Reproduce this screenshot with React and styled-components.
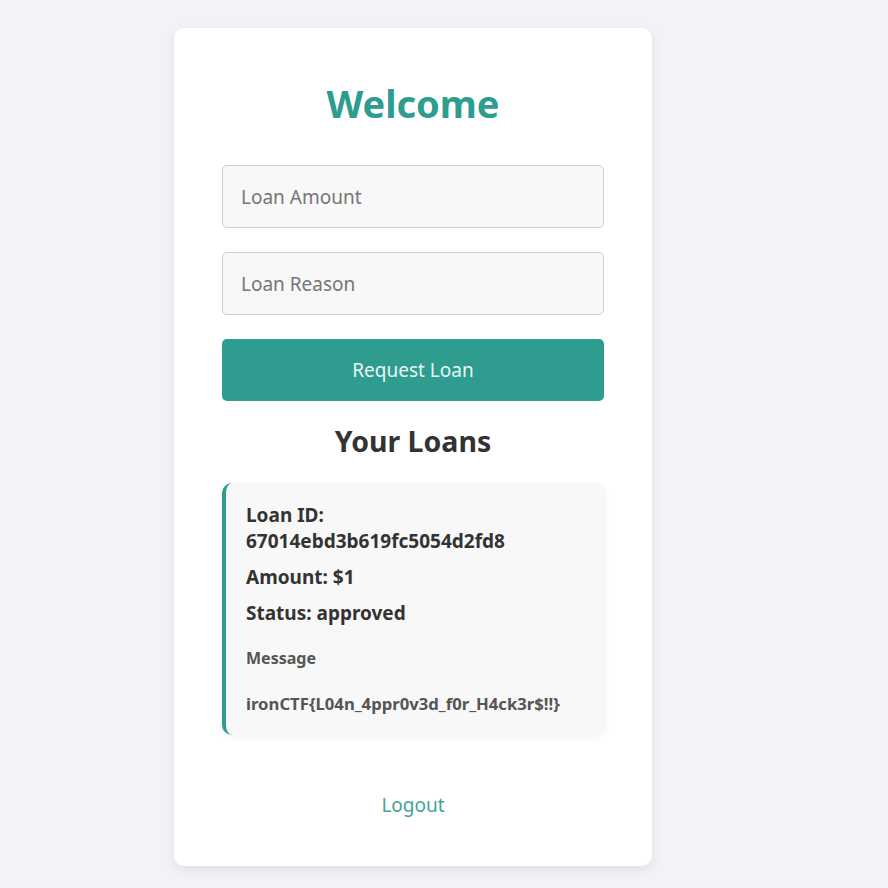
import React from 'react'
import styled, { createGlobalStyle } from 'styled-components'

const GlobalStyle = createGlobalStyle`
  html, body {
    margin: 0;
    padding: 0;
    background: #f3f2f8;
    font-family: 'Noto Sans', 'Open Sans', sans-serif;
  }
`

const Page = styled.div`
  min-height: 888px;
  padding: 28px 0 0 174px;
  box-sizing: border-box;
`

const Card = styled.div`
  width: 478px;
  box-sizing: border-box;
  background: #fff;
  border-radius: 10px;
  box-shadow: 0 4px 12px rgba(0, 0, 0, 0.08);
  padding: 50px 48px 48px;
  display: flex;
  flex-direction: column;
  align-items: stretch;
`

const Title = styled.h1`
  margin: 0 0 37px;
  text-align: center;
  color: #2e9c8f;
  font-size: 38px;
  line-height: 50px;
  font-weight: 700;
`

const Input = styled.input`
  height: 63px;
  box-sizing: border-box;
  margin-bottom: 24px;
  padding: 0 18px;
  border: 1px solid #cfcfcf;
  border-radius: 5px;
  background: #f8f8f8;
  font-family: inherit;
  font-size: 19px;
  color: #333;

  &::placeholder {
    color: #757575;
  }
`

const Button = styled.button`
  height: 62px;
  border: none;
  border-radius: 5px;
  background: #2e9c8f;
  color: #eaf6f4;
  font-family: inherit;
  font-size: 19px;
  cursor: pointer;
`

const Subtitle = styled.h2`
  margin: 21px 0 23px;
  text-align: center;
  color: #333;
  font-size: 28.5px;
  line-height: 38px;
  font-weight: 700;
`

const LoanCard = styled.div`
  background: #f8f8f8;
  border-left: 4px solid #2e9c8f;
  border-radius: 10px;
  box-shadow: 0 2px 6px rgba(0, 0, 0, 0.05);
  padding: 19px 22px 20px 20px;
  margin-right: -2px;
`

const Field = styled.p`
  margin: 0 0 10px;
  font-size: 19px;
  line-height: 26px;
  font-weight: 700;
  color: #333;
`

const Note = styled.p`
  margin: ${props => props.first ? '21px 0 0' : '24px 0 0'};
  font-size: ${props => props.first ? '16px' : '16.7px'};
  line-height: 22px;
  font-weight: 700;
  color: #555;
`

const LogoutLink = styled.a`
  margin-top: 57px;
  text-align: center;
  color: #2e9c8f;
  font-size: 19px;
  line-height: 26px;
  text-decoration: none;
  opacity: 0.9;
`

const loan = {
  id: '67014ebd3b619fc5054d2fd8',
  amount: 1,
  status: 'approved',
  message: 'ironCTF{L04n_4ppr0v3d_f0r_H4ck3r$!!}',
}

const App = () => {
  return (
    <Page>
      <GlobalStyle />
      <Card>
        <Title>Welcome</Title>
        <Input placeholder="Loan Amount" />
        <Input placeholder="Loan Reason" />
        <Button>Request Loan</Button>
        <Subtitle>Your Loans</Subtitle>
        <LoanCard>
          <Field>Loan ID: {loan.id}</Field>
          <Field>Amount: ${loan.amount}</Field>
          <Field>Status: {loan.status}</Field>
          <Note first>Message</Note>
          <Note>{loan.message}</Note>
        </LoanCard>
        <LogoutLink href="#">Logout</LogoutLink>
      </Card>
    </Page>
  )
}

export default App
